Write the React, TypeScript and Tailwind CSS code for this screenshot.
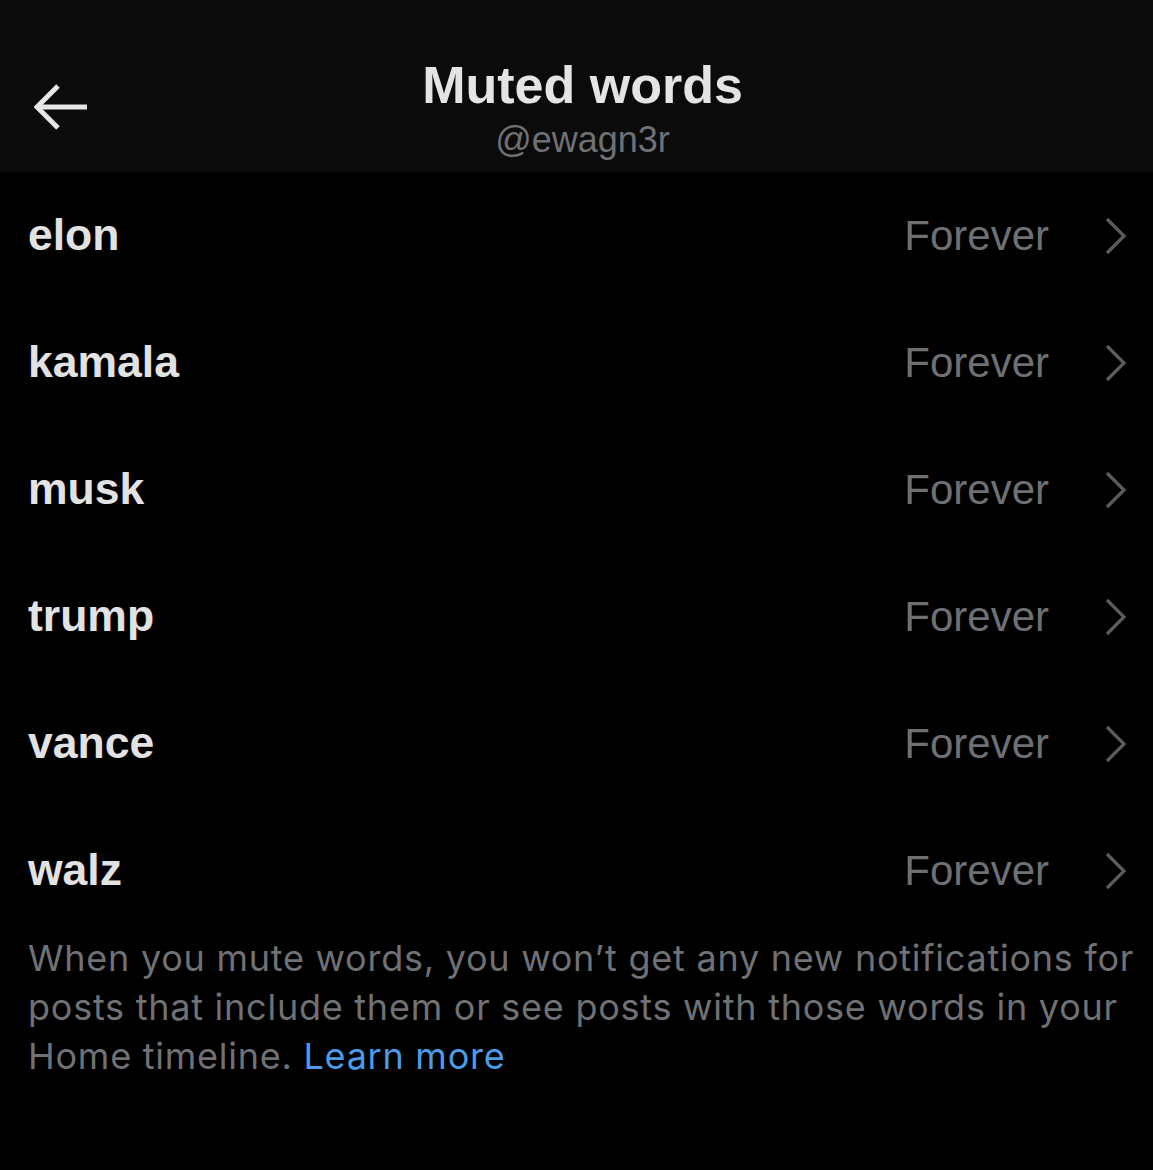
import React from "react";

const words = ["elon", "kamala", "musk", "trump", "vance", "walz"];

function Chevron() {
  return (
    <svg width="24" height="38" viewBox="0 0 24 38" fill="none" className="shrink-0">
      <path d="M3 2 L20 19 L3 36" stroke="#5c5c5e" strokeWidth="3.2" strokeLinecap="butt" strokeLinejoin="miter" />
    </svg>
  );
}

function BackArrow() {
  return (
    <svg width="54" height="46" viewBox="0 0 54 46" fill="none">
      <path d="M24 2 L3 23 L24 44" stroke="#e6e6e6" strokeWidth="5" strokeLinejoin="miter" />
      <path d="M4 23 H53" stroke="#e6e6e6" strokeWidth="5" />
    </svg>
  );
}

export default function App() {
  return (
    <div
      className="w-[1153px] h-[1170px] bg-black overflow-hidden"
      style={{ fontFamily: '"Liberation Sans", Arial, sans-serif' }}
    >
      <header className="relative h-[172px] bg-[#0b0b0c] flex flex-col items-center pt-[55px]">
        <div className="absolute left-[34px] top-[84px]">
          <BackArrow />
        </div>
        <h1 className="text-[52px] leading-[60px] font-bold text-[#e4e4e4] pl-[12px]">Muted words</h1>
        <div className="text-[36px] leading-[42px] text-[#6f7175] mt-[4px] pl-[12px]">@ewagn3r</div>
      </header>
      <ul>
        {words.map((w) => (
          <li key={w} className="h-[127px] flex items-center pl-[28px] pr-[25px]">
            <span className="flex-1 text-[44.5px] font-bold text-[#e2e2e2]">{w}</span>
            <span className="text-[42px] text-[#6e7074] mr-[55px]">Forever</span>
            <Chevron />
          </li>
        ))}
      </ul>
      <p
        className="pl-[28px] text-[36px] leading-[49px] text-[#6f7175] tracking-[0.75px] whitespace-nowrap"
        style={{ fontFamily: 'Inter, "Liberation Sans", sans-serif' }}
      >
        When you mute words, you won’t get any new notifications for
        <br />
        posts that include them or see posts with those words in your
        <br />
        Home timeline. <span className="text-[#4b9be9]">Learn more</span>
      </p>
    </div>
  );
}
